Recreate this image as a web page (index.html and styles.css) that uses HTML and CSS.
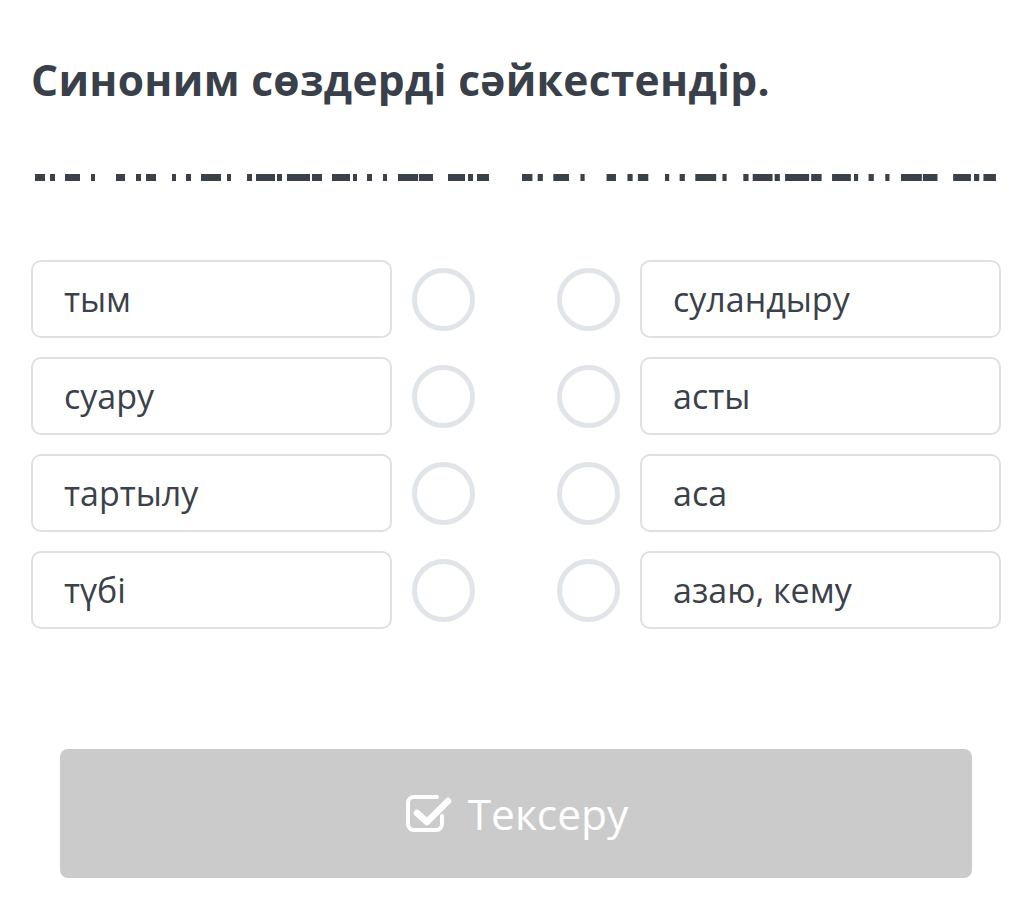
FILE: index.html
```html
<!DOCTYPE html>
<html lang="kk">
<head>
<meta charset="utf-8">
<title>Синоним сөздерді сәйкестендір.</title>
<link rel="stylesheet" href="styles.css">
</head>
<body>
<svg class="defs" width="0" height="0" aria-hidden="true">
  <symbol id="blanks" viewBox="0 0 455 7" preserveAspectRatio="none">
    <rect x="0" y="0" width="10" height="7"/>
    <rect x="15" y="0" width="5" height="7"/>
    <rect x="30" y="0" width="15" height="7"/>
    <rect x="56" y="0" width="4" height="7"/>
    <rect x="81" y="0" width="9" height="7"/>
    <rect x="101" y="0" width="5" height="7"/>
    <rect x="111" y="0" width="10" height="7"/>
    <rect x="137" y="0" width="4" height="7"/>
    <rect x="151" y="0" width="5" height="7"/>
    <rect x="166" y="0" width="20" height="7"/>
    <rect x="192" y="0" width="4" height="7"/>
    <rect x="212" y="0" width="5" height="7"/>
    <rect x="221" y="0" width="19" height="7"/>
    <rect x="242" y="0" width="5" height="7"/>
    <rect x="252" y="0" width="23" height="7"/>
    <rect x="277" y="0" width="10" height="7"/>
    <rect x="297" y="0" width="18" height="7"/>
    <rect x="318" y="0" width="4" height="7"/>
    <rect x="332" y="0" width="5" height="7"/>
    <rect x="348" y="0" width="4" height="7"/>
    <rect x="363" y="0" width="20" height="7"/>
    <rect x="384" y="0" width="14" height="7"/>
    <rect x="413" y="0" width="17" height="7"/>
    <rect x="433" y="0" width="5" height="7"/>
    <rect x="442" y="0" width="12" height="7"/>
  </symbol>
</svg>
<main class="page">
  <h1 class="title">Синоним сөздерді сәйкестендір.</h1>
  <div class="blanks">
    <svg class="blank blank-left" aria-hidden="true"><use href="#blanks"/></svg>
    <svg class="blank blank-right" aria-hidden="true"><use href="#blanks"/></svg>
  </div>
  <div class="match">
    <div class="row">
      <div class="card">тым</div>
      <span class="dot dot-left"></span>
      <span class="dot dot-right"></span>
      <div class="card">суландыру</div>
    </div>
    <div class="row">
      <div class="card">суару</div>
      <span class="dot dot-left"></span>
      <span class="dot dot-right"></span>
      <div class="card">асты</div>
    </div>
    <div class="row">
      <div class="card">тартылу</div>
      <span class="dot dot-left"></span>
      <span class="dot dot-right"></span>
      <div class="card">аса</div>
    </div>
    <div class="row">
      <div class="card">түбі</div>
      <span class="dot dot-left"></span>
      <span class="dot dot-right"></span>
      <div class="card">азаю, кему</div>
    </div>
  </div>
  <button class="check" type="button">
    <svg class="check-icon" viewBox="0 0 46 38" aria-hidden="true">
      <path d="M36 21 V29 a6 6 0 0 1 -6 6 H8 a6 6 0 0 1 -6 -6 V8 a6 6 0 0 1 6 -6 H31" fill="none" stroke="#fff" stroke-width="4" stroke-linecap="round"/>
      <path d="M11 18 L21 27 L42 6" fill="none" stroke="#fff" stroke-width="6.5" stroke-linecap="round" stroke-linejoin="round"/>
    </svg>
    <span>Тексеру</span>
  </button>
</main>
</body>
</html>
```

FILE: styles.css
```css
* { box-sizing: border-box; }

html, body {
  margin: 0;
  padding: 0;
  background: #ffffff;
}

body {
  font-family: "Open Sans", "Noto Sans", "Liberation Sans", sans-serif;
  color: #3b4149;
}

.defs {
  position: absolute;
  width: 0;
  height: 0;
  overflow: hidden;
}

.page {
  width: 1034px;
  padding: 48px 33px 0 31px;
}

.title {
  margin: 0;
  font-size: 42.5px;
  font-weight: 700;
  line-height: 64px;
  color: #3a4049;
  letter-spacing: 0.3px;
}

.blanks {
  display: flex;
  gap: 32px;
  margin-top: 62px;
  padding-left: 4px;
  height: 7px;
}

.blank {
  display: block;
  height: 7px;
  fill: #3b4149;
}

.blank-left { width: 455px; }
.blank-right { width: 475px; }

.match {
  display: flex;
  flex-direction: column;
  gap: 19px;
  margin-top: 79px;
}

.row {
  display: grid;
  grid-template-columns: 361px 124px 124px 361px;
  align-items: center;
}

.dot-left {
  justify-self: start;
  margin-left: 20px;
}

.dot-right {
  justify-self: end;
  margin-right: 20px;
}

.card {
  height: 78px;
  border: 2.5px solid #dee1e4;
  border-radius: 10px;
  padding: 0 0 0 31px;
  display: flex;
  align-items: center;
  font-size: 34px;
  color: #3b4149;
}

.dot {
  display: block;
  width: 63px;
  height: 63px;
  border: 5px solid #e1e5e9;
  border-radius: 50%;
}

.check {
  margin: 120px 29px 0 29px;
  width: 912px;
  height: 129px;
  border: none;
  border-radius: 8px;
  background: #cbcbcb;
  color: #ffffff;
  font-family: "Open Sans", "Noto Sans", "Liberation Sans", sans-serif;
  font-size: 42.5px;
  display: flex;
  align-items: center;
  justify-content: center;
  gap: 16px;
  padding: 0 0 0 2px;
}

.check-icon {
  width: 46px;
  height: 38px;
  display: block;
}
```
